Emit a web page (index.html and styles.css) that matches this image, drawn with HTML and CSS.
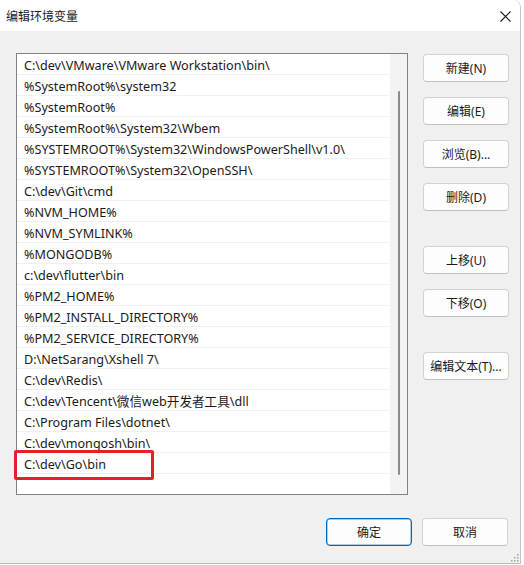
FILE: index.html
```html
<!DOCTYPE html>
<html lang="zh-CN">
<head>
<meta charset="utf-8">
<title>编辑环境变量</title>
<link rel="stylesheet" href="styles.css">
</head>
<body>
<div class="window">
  <div class="titlebar">
    <span class="title">编辑环境变量</span>
    <svg class="close" width="11" height="11" viewBox="0 0 11 11"><path d="M0.5 0.5 L10.5 10.5 M10.5 0.5 L0.5 10.5" stroke="#1a1a1a" stroke-width="1.1" fill="none"/></svg>
  </div>
  <div class="content">
    <div class="main">
      <div class="listbox">
        <ul class="list">
          <li>C:\dev\VMware\VMware Workstation\bin\</li>
          <li>%SystemRoot%\system32</li>
          <li>%SystemRoot%</li>
          <li>%SystemRoot%\System32\Wbem</li>
          <li>%SYSTEMROOT%\System32\WindowsPowerShell\v1.0\</li>
          <li>%SYSTEMROOT%\System32\OpenSSH\</li>
          <li>C:\dev\Git\cmd</li>
          <li>%NVM_HOME%</li>
          <li>%NVM_SYMLINK%</li>
          <li>%MONGODB%</li>
          <li>c:\dev\flutter\bin</li>
          <li>%PM2_HOME%</li>
          <li>%PM2_INSTALL_DIRECTORY%</li>
          <li>%PM2_SERVICE_DIRECTORY%</li>
          <li>D:\NetSarang\Xshell 7\</li>
          <li>C:\dev\Redis\</li>
          <li>C:\dev\Tencent\微信web开发者工具\dll</li>
          <li>C:\Program Files\dotnet\</li>
          <li>C:\dev\mongosh\bin\</li>
          <li>C:\dev\Go\bin</li>
        </ul>
        <div class="scrollbar"><div class="thumb"></div></div>
        <div class="highlight"></div>
      </div>
      <div class="side">
        <button class="btn">新建(N)</button>
        <button class="btn">编辑(E)</button>
        <button class="btn">浏览(B)...</button>
        <button class="btn">删除(D)</button>
        <div class="spacer"></div>
        <button class="btn">上移(U)</button>
        <button class="btn">下移(O)</button>
        <div class="spacer"></div>
        <button class="btn">编辑文本(T)...</button>
      </div>
    </div>
    <div class="footer">
      <button class="btn primary">确定</button>
      <button class="btn">取消</button>
    </div>
    <svg class="grip" width="9" height="9" viewBox="0 0 9 9" fill="#a0a0a0"><rect x="7" y="1" width="1.5" height="1.5"/><rect x="4" y="4" width="1.5" height="1.5"/><rect x="7" y="4" width="1.5" height="1.5"/><rect x="1" y="7" width="1.5" height="1.5"/><rect x="4" y="7" width="1.5" height="1.5"/><rect x="7" y="7" width="1.5" height="1.5"/></svg>
  </div>
</div>
</body>
</html>
```
FILE: styles.css
```css
* { box-sizing: border-box; }
html, body { margin: 0; padding: 0; background: #ffffff; }
body {
  font-family: "Noto Sans", "Noto Sans CJK SC", sans-serif;
  font-size: 12px;
  color: #1a1a1a;
}
.window {
  width: 521px;
  height: 564px;
  background: #f0f0f0;
  border-right: 1px solid #c4c4c4;
  border-bottom: 1px solid #b8b8b8;
  border-top-right-radius: 8px;
  display: flex;
  flex-direction: column;
  overflow: hidden;
}
.titlebar {
  height: 31px;
  background: #ffffff;
  display: flex;
  align-items: center;
  justify-content: space-between;
  padding: 0 9px 0 6px;
  flex: none;
}
.title {
  font-family: "Noto Sans CJK SC", sans-serif;
  font-size: 12px;
  color: #1a1a1a;
}
.close { display: block; margin-top: 1px; }
.content {
  flex: 1;
  padding: 22px 11px 0 16px;
  display: flex;
  flex-direction: column;
  position: relative;
}
.main {
  display: flex;
  gap: 15px;
}
.listbox {
  width: 392px;
  height: 442px;
  background: #ffffff;
  border: 1px solid #828282;
  position: relative;
  display: flex;
}
.list {
  list-style: none;
  margin: 0;
  padding: 0;
  flex: 1;
}
.list li {
  height: 21px;
  line-height: 20px;
  padding: 2px 0 0 7px;
  font-size: 12.6px;
  border-bottom: 1px solid #f0f0f0;
  white-space: nowrap;
  color: #1a1a1a;
}
.scrollbar {
  width: 17px;
  background: #f3f3f3;
  margin-left: 1px;
  display: flex;
  justify-content: center;
  padding-top: 37px;
}
.thumb {
  width: 2px;
  height: 384px;
  background: #8a8a8a;
  border-radius: 1px;
  margin-left: 1px;
}
.highlight {
  position: absolute;
  left: -3px;
  top: 396px;
  width: 140px;
  height: 30px;
  border: 3px solid #e3202b;
  border-radius: 2px;
}
.side {
  display: flex;
  flex-direction: column;
  gap: 15px;
  padding-top: 1px;
}
.spacer { height: 5px; }
.btn {
  width: 86px;
  height: 28px;
  background: #fdfdfd;
  border: 1px solid #d2d2d2;
  border-bottom-color: #c0c0c0;
  border-radius: 4px;
  font-family: "Noto Sans", "Noto Sans CJK SC", sans-serif;
  font-size: 12px;
  color: #1a1a1a;
  padding: 0;
  flex: none;
}
.btn.primary {
  border: 1px solid #0067c0;
  box-shadow: inset 0 0 0 0.5px #5a9ad6;
}
.footer {
  display: flex;
  justify-content: flex-end;
  gap: 10px;
  margin-top: 23px;
  padding-right: 1px;
}
.grip {
  position: absolute;
  right: 1px;
  bottom: 1px;
}
```
